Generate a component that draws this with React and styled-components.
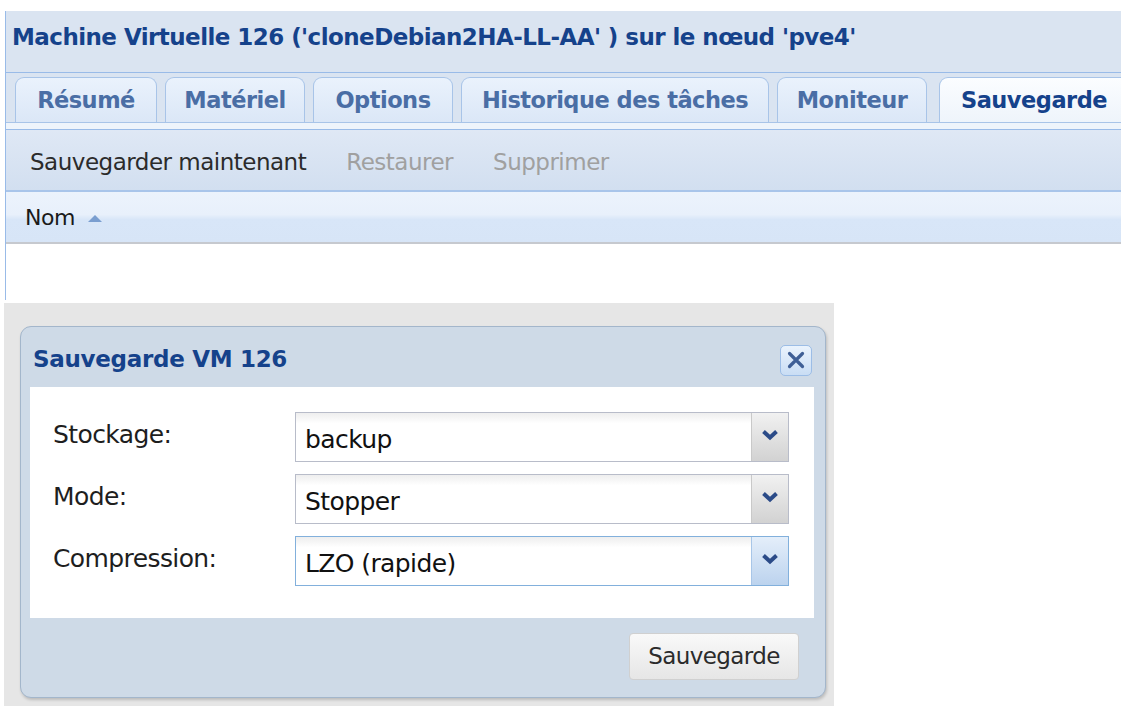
import React from "react";
import styled, { createGlobalStyle } from "styled-components";

const GlobalStyle = createGlobalStyle`
  html, body { margin: 0; padding: 0; background: #ffffff; }
  body { font-family: "DejaVu Sans", Tahoma, sans-serif; }
  * { box-sizing: border-box; }
`;

const Page = styled.div`
  width: 1121px;
  height: 706px;
  overflow: hidden;
  background: #ffffff;
  display: flex;
  flex-direction: column;
`;

/* ---------- VM panel ---------- */
const Panel = styled.section`
  margin: 11px 0 0 5px;
  width: 1116px;
  height: 289px;
  border-left: 1px solid #99bbe8;
  display: flex;
  flex-direction: column;
  background: #ffffff;
`;

const PanelHeader = styled.header`
  height: 61px;
  background: #dae4f1;
  display: flex;
  align-items: center;
  padding-left: 6px;
  padding-bottom: 10px;
`;

const PanelTitle = styled.h1`
  margin: 0;
  font-size: 23px;
  font-weight: bold;
  color: #15428b;
  white-space: nowrap;
  letter-spacing: -0.55px;
`;

const TabStrip = styled.nav`
  height: 58px;
  background: #dae4f1;
  border-top: 1px solid #99bbe8;
  display: flex;
  flex-direction: column;
`;

const TabRow = styled.div`
  display: flex;
  gap: 8px;
  padding: 4px 0 0 9px;
  height: 49px;
  align-items: flex-end;
`;

const Tab = styled.div`
  width: ${(p) => p.$w}px;
  height: 45px;
  flex: none;
  margin-right: ${(p) => p.$after || 0}px;
  border: 1px solid #a8c4e8;
  border-bottom: none;
  border-radius: 9px 9px 0 0;
  background: ${(p) =>
    p.$active
      ? "linear-gradient(#fbfdff, #eef4fb)"
      : "linear-gradient(#eaf2fc, #dbe7f7)"};
  display: flex;
  align-items: center;
  justify-content: center;
  font-size: 22.5px;
  font-weight: bold;
  letter-spacing: -0.5px;
  color: ${(p) => (p.$active ? "#15428b" : "#4a6ea5")};
  padding-bottom: 1px;
  ${(p) => p.$active && "margin-bottom: -1px; height: 46px;"}
`;

const TabFoot = styled.div`
  height: 8px;
  background: #eef4fb;
  border-top: 1px solid #a8c4e8;
  border-bottom: 1px solid #99bbe8;
`;

const Toolbar = styled.div`
  height: 62px;
  background: linear-gradient(#dfe8f5, #d2dff0);
  border-bottom: 2px solid #a9c5ea;
  display: flex;
  align-items: center;
  gap: 40px;
  padding: 3px 0 0 24px;
`;

const ToolButton = styled.span`
  font-size: 23px;
  letter-spacing: -0.5px;
  color: ${(p) => (p.$disabled ? "#a0a0a0" : "#2b2b2b")};
`;

const GridHeader = styled.div`
  height: 52px;
  background: linear-gradient(#ecf3fc 0%, #e8f0fb 45%, #d8e6f8 55%, #d7e5f7 100%);
  border-bottom: 2px solid #c6c9cf;
  display: flex;
  align-items: center;
  gap: 13px;
  padding-left: 19px;
`;

const ColumnTitle = styled.span`
  font-size: 22px;
  letter-spacing: -0.4px;
  color: #1a1a1a;
`;

const SortArrow = styled.span`
  width: 0;
  height: 0;
  border-left: 7px solid transparent;
  border-right: 7px solid transparent;
  border-bottom: 7px solid #7a9ed0;
  margin-top: 3px;
`;

const GridBody = styled.div`
  flex: 1;
  background: #ffffff;
`;

/* ---------- dialog area ---------- */
const Backdrop = styled.div`
  margin: 3px 0 0 4px;
  width: 830px;
  flex: 1;
  background: #e6e6e6;
  padding: 23px 0 0 16px;
`;

const Dialog = styled.div`
  width: 806px;
  height: 372px;
  border: 1px solid #a3b6cb;
  border-radius: 11px;
  background: #cedae7;
  box-shadow: 1px 2px 3px rgba(0, 0, 0, 0.18);
  display: flex;
  flex-direction: column;
  padding: 0 11px 0 9px;
`;

const DialogHeader = styled.div`
  height: 60px;
  display: flex;
  align-items: center;
  justify-content: space-between;
  padding: 0 2px 0 3px;
`;

const DialogTitle = styled.h2`
  margin: 0;
  font-size: 23px;
  font-weight: bold;
  letter-spacing: -0.3px;
  color: #15428b;
  margin-top: 4px;
`;

const CloseButton = styled.button`
  width: 32px;
  height: 31px;
  padding: 0;
  border: 1px solid #9cbde6;
  border-radius: 5px;
  background: linear-gradient(#eaf3fd, #c9ddf4);
  display: flex;
  align-items: center;
  justify-content: center;
  margin-top: 6px;
`;

const DialogBody = styled.div`
  height: 231px;
  background: #ffffff;
  padding: 25px 24px 0 23px;
  display: flex;
  flex-direction: column;
  gap: 12px;
`;

const FieldRow = styled.div`
  display: flex;
  align-items: center;
  height: 50px;
`;

const FieldLabel = styled.label`
  width: 242px;
  flex: none;
  font-size: 25px;
  letter-spacing: -0.6px;
  color: #1e1e1e;
  padding-bottom: 6px;
`;

const Select = styled.div`
  width: 494px;
  height: 50px;
  display: flex;
  border: 1px solid ${(p) => (p.$focused ? "#82b0dc" : "#b8bcc9")};
  background: linear-gradient(#eeeeee 0%, #ffffff 22%, #ffffff 100%);
`;

const SelectValue = styled.span`
  flex: 1;
  display: flex;
  align-items: center;
  padding: 4px 0 0 9px;
  font-size: 25px;
  letter-spacing: -0.6px;
  color: #111;
`;

const Trigger = styled.span`
  width: 37px;
  flex: none;
  display: flex;
  align-items: center;
  justify-content: center;
  padding-bottom: 4px;
  border-left: 1px solid ${(p) => (p.$focused ? "#a8c6e8" : "#c9c9c9")};
  background: ${(p) =>
    p.$focused
      ? "linear-gradient(#e4eefa, #bcd3ee)"
      : "linear-gradient(#f1f1f1, #d2d2d2)"};
`;

const DialogFooter = styled.div`
  flex: 1;
  display: flex;
  justify-content: flex-end;
  align-items: flex-start;
  padding: 15px 15px 0 0;
`;

const ActionButton = styled.button`
  width: 170px;
  height: 47px;
  border: 1px solid #d0d0d0;
  border-radius: 4px;
  background: linear-gradient(#f9f9f9, #e6e6e6);
  font-family: "DejaVu Sans", Tahoma, sans-serif;
  font-size: 23px;
  letter-spacing: -0.6px;
  color: #2b2b2b;
  padding: 0 0 2px;
`;

const Chevron = () => (
  <svg width="18" height="12" viewBox="0 0 18 12">
    <path d="M2.5 2.5 L9 8.5 L15.5 2.5" fill="none" stroke="#2b4b88" strokeWidth="4" />
  </svg>
);

const CloseIcon = () => (
  <svg width="22" height="22" viewBox="0 0 22 22">
    <path d="M4.5 4.5 L17.5 17.5 M17.5 4.5 L4.5 17.5" stroke="#3f5f96" strokeWidth="3.2" strokeLinecap="round" />
  </svg>
);

const tabs = [
  { label: "Résumé", w: 142 },
  { label: "Matériel", w: 140 },
  { label: "Options", w: 140 },
  { label: "Historique des tâches", w: 308 },
  { label: "Moniteur", w: 150, after: 4 },
  { label: "Sauvegarde", w: 190, active: true },
];

const fields = [
  { label: "Stockage:", value: "backup" },
  { label: "Mode:", value: "Stopper" },
  { label: "Compression:", value: "LZO (rapide)", focused: true },
];

export default function App() {
  return (
    <Page>
      <GlobalStyle />
      <Panel>
        <PanelHeader>
          <PanelTitle>Machine Virtuelle 126 ('cloneDebian2HA-LL-AA' ) sur le nœud 'pve4'</PanelTitle>
        </PanelHeader>
        <TabStrip>
          <TabRow>
            {tabs.map((t) => (
              <Tab key={t.label} $w={t.w} $after={t.after} $active={t.active}>
                {t.label}
              </Tab>
            ))}
          </TabRow>
          <TabFoot />
        </TabStrip>
        <Toolbar>
          <ToolButton>Sauvegarder maintenant</ToolButton>
          <ToolButton $disabled>Restaurer</ToolButton>
          <ToolButton $disabled>Supprimer</ToolButton>
        </Toolbar>
        <GridHeader>
          <ColumnTitle>Nom</ColumnTitle>
          <SortArrow />
        </GridHeader>
        <GridBody />
      </Panel>

      <Backdrop>
        <Dialog>
          <DialogHeader>
            <DialogTitle>Sauvegarde VM 126</DialogTitle>
            <CloseButton aria-label="Fermer">
              <CloseIcon />
            </CloseButton>
          </DialogHeader>
          <DialogBody>
            {fields.map((f) => (
              <FieldRow key={f.label}>
                <FieldLabel>{f.label}</FieldLabel>
                <Select $focused={f.focused}>
                  <SelectValue>{f.value}</SelectValue>
                  <Trigger $focused={f.focused}>
                    <Chevron />
                  </Trigger>
                </Select>
              </FieldRow>
            ))}
          </DialogBody>
          <DialogFooter>
            <ActionButton>Sauvegarde</ActionButton>
          </DialogFooter>
        </Dialog>
      </Backdrop>
    </Page>
  );
}
